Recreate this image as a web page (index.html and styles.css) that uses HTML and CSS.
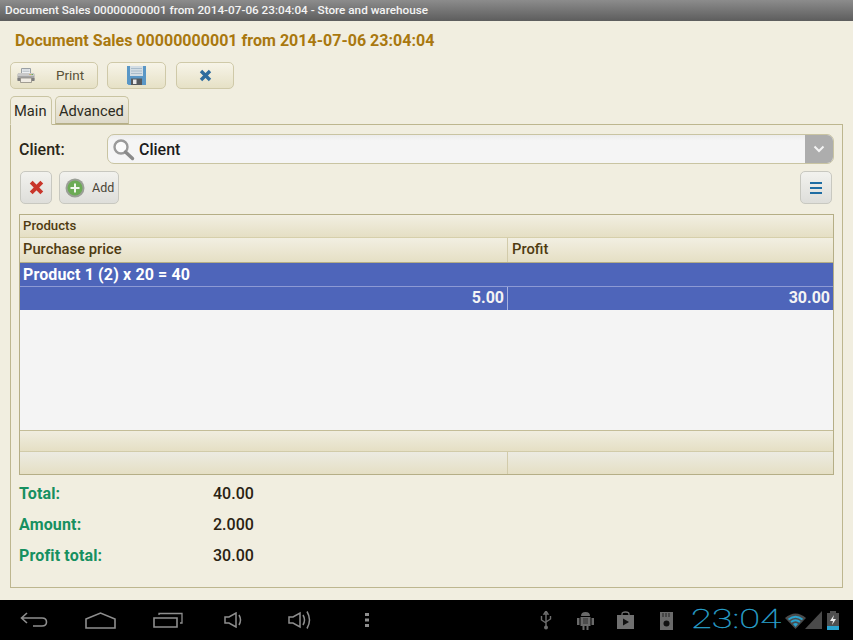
FILE: index.html
```html
<!DOCTYPE html>
<html lang="en">
<head>
<meta charset="utf-8">
<title>Document Sales</title>
<link rel="stylesheet" href="styles.css">
</head>
<body>
<div class="screen">
  <div class="titlebar">Document Sales 00000000001 from 2014-07-06 23:04:04 - Store and warehouse</div>
  <main class="content">
    <h1 class="heading">Document Sales 00000000001 from 2014-07-06 23:04:04</h1>
    <div class="toolbar">
      <button class="btn btn-print">
        <svg class="ico-print" width="18" height="15" viewBox="0 0 18 15"><path d="M4.500 0.500h9v5h-9z" fill="#eef0f2" stroke="#9aa0a4"/><path d="M5.500 2h7M5.500 3.500h7" stroke="#c4cbd0"/><path d="M0.500 7q0-2 2-2h13q2 0 2 2v5h-17z" fill="#a6a6a6"/><path d="M0.500 7q0-2 2-2h13q2 0 2 2v1h-17z" fill="#c9c9c9"/><path d="M0.500 10h17v3h-17z" fill="#7e7e7e"/><path d="M3.500 10h11v4.500h-11z" fill="#f0ece4" stroke="#8e8a82" stroke-width="0.800"/><path d="M14.500 6.500h1.500" stroke="#6fae4a" stroke-width="1.200"/><path d="M12.500 6.500h1.200" stroke="#d8a23c" stroke-width="1.200"/></svg>
        <span>Print</span>
      </button>
      <button class="btn btn-save">
        <svg width="19" height="19" viewBox="0 0 19 19"><path d="M0 0h19v19H1.500L0 17.500z" fill="#5a97c6"/><path d="M3 0h13v10H3z" fill="#d3dde4"/><path d="M4 2.500h11M4 5h11M4 7.500h11" stroke="#a9bccb"/><path d="M4 12.500h11V19H4z" fill="#55595d"/><path d="M6 13.500h3.500V18H6z" fill="#e8e8e8"/></svg>
      </button>
      <button class="btn btn-cancel">
        <svg width="13" height="13" viewBox="0 0 13 13"><path d="M2 2l9 9M11 2l-9 9" stroke="#2e6c9e" stroke-width="3.400"/></svg>
      </button>
    </div>
    <div class="tabs">
      <div class="tab tab-active">Main</div>
      <div class="tab">Advanced</div>
    </div>
    <section class="panel">
      <div class="client-row">
        <label class="client-label">Client:</label>
        <div class="combo">
          <svg class="ico-search" width="23" height="23" viewBox="0 0 23 23"><circle cx="9" cy="9" r="6.500" fill="#fbfbfb" stroke="#9a9a9a" stroke-width="2.400"/><path d="M13.500 14l7 6.500" stroke="#8a8a8a" stroke-width="3.400" stroke-linecap="round"/></svg>
          <span class="combo-text">Client</span>
          <span class="combo-arrow">
            <svg width="12" height="8" viewBox="0 0 12 8"><path d="M1.500 1.500L6 6l4.500-4.500" fill="none" stroke="#f4f4f4" stroke-width="2"/></svg>
          </span>
        </div>
      </div>
      <div class="action-row">
        <button class="gbtn gbtn-del">
          <svg width="15" height="15" viewBox="0 0 15 15"><path d="M2.200 2.200l10.600 10.600M12.800 2.200L2.200 12.800" stroke="#c9362b" stroke-width="4"/></svg>
        </button>
        <button class="gbtn gbtn-add">
          <svg width="20" height="20" viewBox="0 0 20 20"><circle cx="10" cy="10" r="9.500" fill="#9a9f96"/><circle cx="10" cy="10" r="7.500" fill="#6cab55"/><path d="M10 5.500v9M5.500 10h9" stroke="#f2f7ee" stroke-width="2"/></svg>
          <span>Add</span>
        </button>
        <button class="gbtn gbtn-menu">
          <svg width="12" height="12" viewBox="0 0 12 12"><path d="M0 0h12v2H0zM0 5h12v2H0zM0 10h12v2H0z" fill="#1f6da3"/></svg>
        </button>
      </div>
      <div class="grid">
        <div class="grid-group">Products</div>
        <div class="grid-row grid-head">
          <div class="cell cell-a">Purchase price</div>
          <div class="cell cell-b">Profit</div>
        </div>
        <div class="sel-title">Product 1 (2) x 20 = 40</div>
        <div class="grid-row sel-row">
          <div class="cell cell-a num">5.00</div>
          <div class="cell cell-b num">30.00</div>
        </div>
        <div class="grid-empty"></div>
        <div class="grid-foot1"></div>
        <div class="grid-row grid-foot2">
          <div class="cell cell-a"></div>
          <div class="cell cell-b"></div>
        </div>
      </div>
      <dl class="totals">
        <div class="total"><dt>Total:</dt><dd>40.00</dd></div>
        <div class="total"><dt>Amount:</dt><dd>2.000</dd></div>
        <div class="total"><dt>Profit total:</dt><dd>30.00</dd></div>
      </dl>
    </section>
  </main>
  <nav class="navbar">
    <div class="nav-left">
      <svg class="n-back" width="28" height="16" viewBox="0 0 28 16"><path d="M7 1L1.500 6 7 11M2 6h20q4.500 0 4.500 4t-4.500 4h-9" fill="none" stroke="#8e8e8e" stroke-width="1.600"/></svg>
      <svg class="n-home" width="31" height="17" viewBox="0 0 31 17"><path d="M1 7L15.500 1 30 7v9H1z" fill="none" stroke="#8e8e8e" stroke-width="1.600"/></svg>
      <svg class="n-rec" width="30" height="16" viewBox="0 0 30 16"><path d="M1 6h23v9H1z" fill="none" stroke="#8e8e8e" stroke-width="1.600"/><path d="M6 3V1.500h23V11h-2" fill="none" stroke="#8e8e8e" stroke-width="1.300"/></svg>
      <svg class="n-vol" width="19" height="16" viewBox="0 0 19 16"><path d="M1 5h4l7-4v14l-7-4H1z" fill="none" stroke="#8e8e8e" stroke-width="1.500"/><path d="M15 3q3 5 0 10" fill="none" stroke="#8e8e8e" stroke-width="1.500"/></svg>
      <svg class="n-vol2" width="24" height="20" viewBox="0 0 24 20"><path d="M1 7h4l7-4v14l-7-4H1z" fill="none" stroke="#8e8e8e" stroke-width="1.500"/><path d="M15 5q3 5 0 10M19 1.500q5 8.500 0 17" fill="none" stroke="#8e8e8e" stroke-width="1.500"/></svg>
      <svg class="n-dots" width="4" height="14" viewBox="0 0 4 14"><path d="M0 0h4v3H0zM0 5.500h4v3H0zM0 11h4v3H0z" fill="#8e8e8e"/></svg>
    </div>
    <div class="nav-right">
      <svg class="s-usb" width="12" height="19" viewBox="0 0 12 19"><path d="M6 0l2 3H4zM6 3v13M1.500 5v4l4.500 3M10.500 5v3l-4.500 3" fill="none" stroke="#6e6e6e" stroke-width="1.400"/><circle cx="6" cy="16.500" r="2" fill="#6e6e6e"/></svg>
      <svg class="s-droid" width="17" height="20" viewBox="0 0 17 20"><path d="M4 6q0-4 4.500-4T13 6z" fill="#6a6a6a"/><path d="M0 8h2.500v7H0zM14.500 8H17v7h-2.500zM3.500 7h10v9h-2v4h-2v-4h-2v4h-2v-4h-2z" fill="#6a6a6a"/><path d="M6 9h5M6 11h5M6 13h5" stroke="#2e2e2e"/></svg>
      <svg class="s-play" width="17" height="18" viewBox="0 0 17 18"><path d="M0 4h17v14H0z" fill="#707070"/><path d="M5 5V3q0-2 3.500-2T12 3v2" fill="none" stroke="#707070" stroke-width="1.300"/><path d="M6 7.500l6 3.500-6 3.500z" fill="#111"/></svg>
      <svg class="s-sd" width="13" height="19" viewBox="0 0 13 19"><path d="M0 1h13v18H0z" fill="#6a6a6a"/><path d="M3 2v4M6 2v4M9 2v4" stroke="#222"/><circle cx="6.500" cy="12.500" r="3" fill="#111"/></svg>
      <div class="clock-box"><span class="clock">23:04</span></div>
      <svg class="s-wifi" width="21" height="17" viewBox="0 0 21 17"><path d="M0 6Q10.500-3 21 6L10.500 17z" fill="#4a4a4a"/><path d="M3.500 7.500q7-5.500 14 0M6 10q4.500-3.500 9 0" fill="none" stroke="#2aa3cf" stroke-width="1.800"/><path d="M8 12q2.500-2 5 0l-2.500 3z" fill="#2aa3cf"/></svg>
      <svg class="s-signal" width="17" height="18" viewBox="0 0 17 18"><path d="M17 0v18H0z" fill="#4a4a4a"/></svg>
      <svg class="s-batt" width="12" height="19" viewBox="0 0 12 19"><path d="M3 0h6v2H3zM0 2h12v17H0z" fill="#4f4f4f"/><path d="M0 15h12v4H0z" fill="#2aa3cf"/><path d="M7 4L3 10h3l-1 4 4-6H6z" fill="#ececec"/></svg>
    </div>
  </nav>
</div>
</body>
</html>
```

FILE: styles.css
```css
* { box-sizing: border-box; }
html, body { margin: 0; padding: 0; }
body { font-family: Roboto, "Liberation Sans", sans-serif; background: #f1eee0; }
.screen { width: 853px; height: 640px; display: flex; flex-direction: column; overflow: hidden; }

.titlebar {
  height: 21px; flex: none; padding: 3px 0 0 5px;
  background: linear-gradient(#8c8c8c, #5d5d5d);
  color: #f4f4f4; font-size: 11.720px; font-weight: 500; line-height: 15px; white-space: nowrap;
}

.content { flex: 1; padding: 0 10px 12px; display: flex; flex-direction: column; min-height: 0; }
.heading { margin: 10px 0 0 5px; height: 19px; font-size: 16px; line-height: 19px; font-weight: 700; color: #a9780f; letter-spacing: 0.020px; white-space: nowrap; }

.toolbar { display: flex; margin-top: 12px; height: 27px; }
.btn {
  height: 27px; padding: 0 0 1px; display: flex; align-items: center; justify-content: center;
  border: 1px solid #cfc9a8; border-radius: 5px;
  background: linear-gradient(#f7f4e8, #e6e1c6);
  font-family: inherit; font-size: 13.500px; color: #5a5238;
}
.btn-print { width: 88px; justify-content: flex-start; padding-left: 6px; }
.btn-print span { margin-left: 21px; }
.btn-save { width: 59px; margin-left: 9px; }
.btn-cancel { width: 58px; margin-left: 10px; }

.tabs { display: flex; gap: 3px; margin-top: 7px; height: 28px; position: relative; z-index: 1; }
.tab {
  height: 28px; padding: 0 3px; line-height: 29px; font-size: 14.700px; color: #2c2a20;
  border: 1px solid #c9c4a2; border-bottom: 1px solid #b5ae86; border-radius: 5px 5px 0 0;
  background: linear-gradient(#f1eee0, #dedacb);
}
.tab-active { width: 42px; background: #f1eee0; border-bottom-color: #f1eee0; height: 29px; }
.tab:not(.tab-active) { width: 74px; }

.panel { flex: 1; border: 1px solid #bdb68f; padding: 9px 8px 0; display: flex; flex-direction: column; }

.client-row { display: flex; align-items: center; height: 30px; }
.client-label { width: 88px; font-size: 16px; font-weight: 500; color: #2a2618; }
.combo {
  flex: 1; height: 30px; display: flex; align-items: center;
  border: 1px solid #c9c4a2; border-radius: 7px; overflow: hidden;
  background: linear-gradient(#ececec, #f5f5f5 20%);
}
.ico-search { margin-left: 4px; flex: none; }
.combo-text { margin-left: 4px; font-size: 16px; font-weight: 500; color: #1c1c1c; flex: 1; }
.combo-arrow { width: 28px; height: 100%; background: #adadad; display: flex; align-items: center; justify-content: center; }

.action-row { display: flex; margin-top: 7px; height: 33px; padding: 0 1px; }
.gbtn {
  height: 33px; padding: 0; display: flex; align-items: center; justify-content: center;
  border: 1px solid #c8c8c0; border-radius: 5px;
  background: linear-gradient(#f2f2ee, #dededa);
  font-family: inherit; font-size: 12.500px; color: #4a4436;
}
.gbtn-del { width: 32px; }
.gbtn-add { width: 60px; margin-left: 7px; justify-content: flex-start; padding-left: 5px; }
.gbtn-add span { margin-left: 7px; }
.gbtn-menu { width: 32px; margin-left: auto; margin-right: 1px; }

.grid { margin-top: 10px; border: 1px solid #b5ae86; height: 261px; display: flex; flex-direction: column; font-size: 14.500px; }
.grid-group {
  height: 23px; flex: none; padding-left: 3px; line-height: 21px; font-size: 13.200px; font-weight: 500; color: #4f3b10;
  background: linear-gradient(#f2efe2, #e5dfc4); border-bottom: 1px solid #d6cfab;
}
.grid-row { display: flex; flex: none; }
.cell { padding: 0 3px; }
.cell-a { width: 488px; border-right: 1px solid #d2cbaa; }
.cell-b { flex: 1; padding-left: 4px; }
.grid-head { height: 25px; line-height: 23px; font-weight: 500; font-size: 14.750px; color: #4f3b10; background: linear-gradient(#f2efe2, #e5dfc4); border-bottom: 1px solid #b5ae86; }
.sel-title { height: 24px; flex: none; padding-left: 3px; line-height: 24px; letter-spacing: 0.130px; background: #4e65ba; color: #fff; font-weight: 700; font-size: 16px; border-bottom: 1px solid #8d9ad4; }
.sel-row { height: 23px; line-height: 22px; background: #4e65ba; color: #f4f4f4; font-weight: 700; font-size: 16px; }
.sel-row .cell-a { border-right-color: #a6b2e0; }
.num { text-align: right; }
.grid-empty { flex: 1; background: #f4f4f4; }
.grid-foot1 { height: 22px; flex: none; background: linear-gradient(#f0ede0, #e5dfc4); border-top: 1px solid #c4bd98; border-bottom: 1px solid #d1cba9; }
.grid-foot2 { height: 22px; background: linear-gradient(#ecebe2, #e5dfc4); }

.totals { margin: 0; padding-top: 4px; font-size: 16px; font-weight: 500; }
.total { display: flex; height: 31px; line-height: 30px; }
.total dt { width: 194px; color: #169060; font-weight: 700; letter-spacing: 0.150px; }
.total dd { margin: 0; color: #2a2212; }

.navbar { height: 40px; flex: none; background: #000; display: flex; justify-content: space-between; align-items: center; }
.nav-left, .nav-right { display: flex; align-items: center; }
.n-back { margin-left: 20px; }
.n-home { margin-left: 37px; }
.n-rec { margin-left: 37px; }
.n-vol { margin-left: 41px; }
.n-vol2 { margin-left: 45px; }
.n-dots { margin-left: 53px; }
.s-droid { margin-left: 25px; }
.s-play { margin-left: 23px; }
.s-sd { margin-left: 26px; }
.clock-box { margin-left: 18px; width: 94px; }
.clock { display: inline-block; font-size: 25px; line-height: 30px; font-weight: 100; color: #2aa3cf; -webkit-text-stroke: 0.3px #2aa3cf; transform: scaleX(1.52); transform-origin: left center; }
.s-wifi { flex: none; }
.s-signal { margin-left: -1px; }
.s-batt { margin-left: 5px; margin-right: 14px; }
```
